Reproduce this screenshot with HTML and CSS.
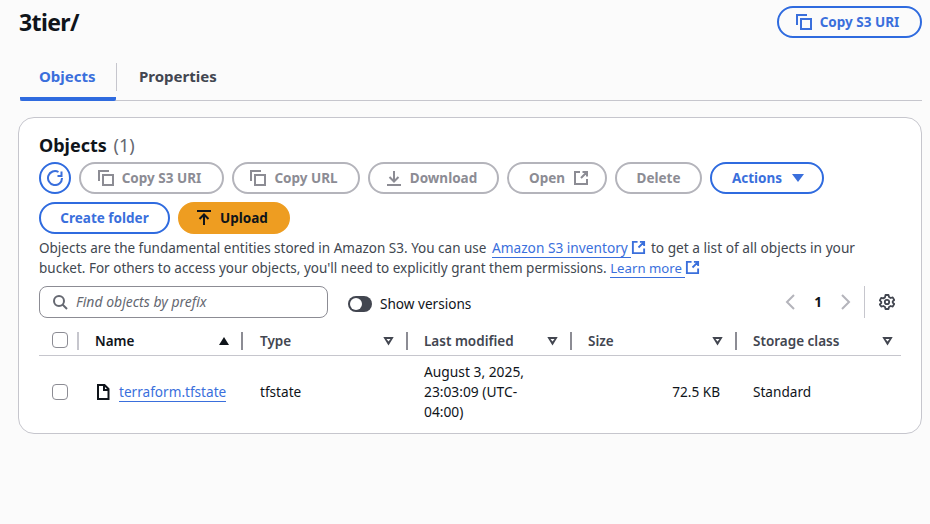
FILE: index.html
```html
<!DOCTYPE html>
<html>
<head>
    <title>3tier/</title>
    <meta charset="UTF-8">
    <link rel="stylesheet" href="styles.css">
</head>
<body>
    <svg class="defs" width="0" height="0">
        <symbol id="i-copy" viewBox="0 0 16 16"><path d="M1 11V1h10M5 5h10v10H5z" fill="none" stroke="currentColor" stroke-width="2"/></symbol>
        <symbol id="i-ext" viewBox="0 0 16 16"><path d="M7 2H2v12h12V9M9.500 2H14v4.500M14 2L8 8" fill="none" stroke="currentColor" stroke-width="2"/></symbol>
    </svg>

    <div class="page-head">
        <h1>3tier/</h1>
        <button class="btn btn-normal"><svg class="icon"><use href="#i-copy"/></svg>Copy S3 URI</button>
    </div>

    <div class="tabs">
        <div class="tab tab-active">Objects</div>
        <div class="tab">Properties</div>
    </div>

    <div class="card">
        <h2>Objects <span class="count">(1)</span></h2>
        <div class="toolbar">
            <button class="btn btn-normal btn-icon">
                <svg class="icon" viewBox="0 0 16 16"><path d="M15 8A7 7 0 1 1 11.500 2M10.500 6H14.500V1.500" fill="none" stroke="currentColor" stroke-width="2"/></svg>
            </button>
            <button class="btn btn-off btn-copy-uri"><svg class="icon"><use href="#i-copy"/></svg>Copy S3 URI</button>
            <button class="btn btn-off btn-copy-url"><svg class="icon"><use href="#i-copy"/></svg>Copy URL</button>
            <button class="btn btn-off btn-download">
                <svg class="icon" viewBox="0 0 16 16"><path d="M8 1v10M3.500 7L8 11.500 12.500 7M1 15h14" fill="none" stroke="currentColor" stroke-width="2"/></svg>Download
            </button>
            <button class="btn btn-off btn-open">Open<svg class="icon icon-after"><use href="#i-ext"/></svg></button>
            <button class="btn btn-off btn-delete">Delete</button>
            <button class="btn btn-normal btn-actions">Actions<svg class="icon icon-after" viewBox="0 0 16 16"><path d="M2 4h12L8 12z" fill="currentColor"/></svg></button>
        </div>
        <div class="toolbar">
            <button class="btn btn-normal btn-create">Create folder</button>
            <button class="btn btn-primary btn-upload">
                <svg class="icon" viewBox="0 0 16 16"><path d="M8 15V5M3.500 9L8 4.500 12.500 9M1 1h14" fill="none" stroke="currentColor" stroke-width="2"/></svg>Upload
            </button>
        </div>

        <p class="desc">Objects are the fundamental entities stored in Amazon S3. You can use <a href="#" class="ext-link inventory"><span>Amazon S3 inventory </span><svg class="icon-link"><use href="#i-ext"/></svg></a> <span class="tail">to get a list of all objects in your</span> bucket. For others to access your objects, you'll need to explicitly grant them permissions. <a href="#" class="ext-link more"><span>Learn more </span><svg class="icon-link"><use href="#i-ext"/></svg></a></p>

        <div class="filter-row">
            <div class="search">
                <svg class="icon" viewBox="0 0 16 16"><circle cx="7" cy="7" r="5" fill="none" stroke="currentColor" stroke-width="2"/><path d="M10.500 10.500L15 15" fill="none" stroke="currentColor" stroke-width="2"/></svg>
                <span>Find objects by prefix</span>
            </div>
            <div class="toggle"><span class="knob"></span></div>
            <span class="toggle-label">Show versions</span>
            <div class="pager">
                <svg class="pg-arrow" viewBox="0 0 10 16"><path d="M9 1L2 8l7 7" fill="none" stroke="currentColor" stroke-width="2"/></svg>
                <span class="pg-num">1</span>
                <svg class="pg-arrow" viewBox="0 0 10 16"><path d="M1 1l7 7-7 7" fill="none" stroke="currentColor" stroke-width="2"/></svg>
            </div>
            <div class="pref">
                <svg class="icon" viewBox="0 0 16 16"><circle cx="8" cy="8" r="2.200" fill="none" stroke="currentColor" stroke-width="1.800"/><path d="M6.500 1h3l.5 2 1.700 1 2-.6 1.500 2.600-1.500 1.400v1.200l1.500 1.400-1.500 2.600-2-.6-1.700 1-.5 2h-3l-.5-2-1.700-1-2 .6L.8 10.400l1.500-1.400V7.800L.8 6.400 2.300 3.800l2 .6 1.700-1z" fill="none" stroke="currentColor" stroke-width="1.800" stroke-linejoin="round"/></svg>
            </div>
        </div>

        <table class="objects">
            <thead>
                <tr>
                    <th class="col-check"><span class="check"></span></th>
                    <th class="col-name"><div class="th-in sorted">Name<span class="sort-up"></span></div></th>
                    <th class="col-type"><div class="th-in">Type<span class="sort"></span></div></th>
                    <th class="col-date"><div class="th-in">Last modified<span class="sort"></span></div></th>
                    <th class="col-size"><div class="th-in">Size<span class="sort"></span></div></th>
                    <th class="col-class"><div class="th-in no-line">Storage class<span class="sort"></span></div></th>
                </tr>
            </thead>
            <tbody>
                <tr>
                    <td class="col-check"><span class="check"></span></td>
                    <td class="col-name">
                        <svg class="file" viewBox="0 0 14 16"><path d="M2 1h6.500L12.500 5v10H2z M8 1v5h4.500" fill="none" stroke="currentColor" stroke-width="2"/></svg><a href="#">terraform.tfstate</a>
                    </td>
                    <td class="col-type">tfstate</td>
                    <td class="col-date">August 3, 2025, 23:03:09 (UTC-04:00)</td>
                    <td class="col-size">72.5 KB</td>
                    <td class="col-class">Standard</td>
                </tr>
            </tbody>
        </table>
    </div>
</body>
</html>
```

FILE: styles.css
```css
* {
    box-sizing: border-box;
}
body {
    margin: 0;
    padding: 6px 8px 0 18px;
    height: 524px;
    overflow: hidden;
    background: #fbfbfb;
    color: #0f141a;
    font-family: "Noto Sans", sans-serif;
    font-size: 13.600px;
    line-height: 20px;
}
.defs {
    position: absolute;
}
.page-head {
    display: flex;
    justify-content: space-between;
    align-items: flex-start;
}
h1 {
    margin: 0 0 0 1px;
    font-size: 23px;
    line-height: 32px;
    font-weight: 700;
    letter-spacing: -0.6px;
}
.btn {
    display: inline-flex;
    align-items: center;
    justify-content: center;
    height: 32px;
    padding: 0 20px;
    border: 2px solid #2f6bdf;
    border-radius: 16px;
    background: #fff;
    color: #3a6fdc;
    font-family: inherit;
    font-size: 13.500px;
    font-weight: 700;
    white-space: nowrap;
}
.page-head .btn {
    background: #fbfbfb;
    width: 145px;
}
.btn-off {
    border-color: #b4b4bb;
    color: #8c8c94;
}
.btn-primary {
    background: #ee9d21;
    border-color: #ee9d21;
    color: #0f141a;
}
.btn-icon {
    width: 32px;
    padding: 0;
}
.btn-copy-uri { width: 145px; }
.btn-copy-url { width: 128px; }
.btn-download { width: 131px; }
.btn-open { width: 100px; }
.btn-delete { width: 87px; }
.btn-actions { width: 114px; }
.btn-create { width: 131px; }
.btn-upload { width: 112px; }
.icon {
    width: 16px;
    height: 16px;
    margin: 0 8px 0 -4px;
    flex: none;
}
.icon-after {
    margin: 0 -4px 0 8px;
}
.btn-icon .icon {
    margin: 0;
}
.tabs {
    display: flex;
    height: 63px;
    padding-top: 22px;
    border-bottom: 1px solid #c6c6cd;
    margin-left: 2px;
}
.tab {
    position: relative;
    height: 41px;
    padding: 6px 20px 0 19px;
    color: #424650;
    font-size: 15px;
    font-weight: 700;
}
.tab-active {
    width: 96px;
    color: #3a6fdc;
    border-bottom: 4px solid #2f6bdf;
    border-radius: 2px;
}
.tab-active::after {
    content: "";
    position: absolute;
    right: -1px;
    top: 3px;
    height: 28px;
    border-right: 1px solid #c6c6cd;
}
.tab:not(.tab-active) {
    padding-left: 23px;
}
.card {
    margin-top: 16px;
    height: 317px;
    padding: 15px 20px 0 20px;
    border: 1px solid #c6c6cd;
    border-radius: 16px;
    background: #fff;
}
h2 {
    margin: 0;
    font-size: 18px;
    line-height: 24px;
    font-weight: 700;
    word-spacing: 2px;
}
.count {
    color: #656871;
    font-weight: 400;
}
.toolbar {
    display: flex;
    gap: 8px;
    margin-top: 8px;
}
h2 + .toolbar {
    margin-top: 5px;
}
.desc {
    margin: 4px 0 0;
    color: #414750;
    font-size: 13.500px;
    width: 840px;
}
.desc a, .col-name a {
    color: #3a6fdc;
    text-decoration: none;
}
.col-name a, .ext-link span {
    border-bottom: 1px solid #3a6fdc;
}
.ext-link span {
    font-size: 13.700px;
}
.inventory {
    margin-left: 2px;
}
.ext-link.more span {
    font-size: 13.200px;
}
.tail {
    font-size: 13.700px;
}
.icon-link {
    width: 15px;
    height: 15px;
    margin-right: 1px;
    vertical-align: -2px;
}
.filter-row {
    display: flex;
    align-items: center;
    height: 32px;
    margin-top: 8px;
}
.search {
    display: flex;
    align-items: center;
    width: 289px;
    height: 32px;
    padding: 0 12px;
    border: 1px solid #8c8c94;
    border-radius: 8px;
    color: #656871;
    font-size: 14px;
    font-style: italic;
}
.search .icon {
    margin: 0 8px 0 0;
}
.toggle {
    width: 24px;
    height: 16px;
    margin: 4px 8px 0 20px;
    padding: 2px;
    border-radius: 8px;
    background: #424650;
}
.knob {
    display: block;
    width: 12px;
    height: 12px;
    border-radius: 50%;
    background: #fff;
}
.toggle-label {
    margin-top: 4px;
}
.pager {
    display: flex;
    align-items: center;
    gap: 19px;
    margin-left: auto;
    padding-right: 13px;
    height: 32px;
    border-right: 1px solid #c6c6cd;
}
.pg-arrow {
    width: 10px;
    height: 16px;
    color: #b4b4bb;
}
.pg-num {
    font-weight: 700;
}
.pref {
    display: flex;
    padding: 0 6px 0 14px;
    color: #424650;
}
.pref .icon {
    margin: 0;
}
.objects {
    width: 862px;
    margin-top: 14px;
    border-collapse: collapse;
    table-layout: fixed;
}
th {
    padding: 0;
    text-align: left;
    color: #424650;
    border-bottom: 1px solid #c6c6cd;
    font-size: 13.500px;
    font-weight: 600;
    vertical-align: top;
}
thead tr {
    height: 23px;
}
td {
    padding: 6px 0;
    vertical-align: middle;
}
.col-check {
    width: 40px;
    padding-left: 13px;
}
.col-name {
    width: 164px;
}
.col-type {
    width: 165px;
}
.col-date {
    width: 164px;
}
.col-size {
    width: 165px;
}
.col-class {
    width: 164px;
}
td.col-name {
    padding-left: 17px;
}
td.col-type {
    padding-left: 17px;
}
td.col-date, td.col-class {
    padding-left: 16px;
}
td.col-date {
    padding-right: 30px;
    font-size: 13.800px;
}
td.col-size {
    padding-right: 17px;
    text-align: right;
}
.check {
    display: block;
    width: 16px;
    height: 16px;
    border: 1px solid #8c8c94;
    border-radius: 4px;
    background: #fff;
}
th.col-check {
    position: relative;
}
th.col-check::after {
    content: "";
    position: absolute;
    right: 0;
    top: 0;
    height: 18px;
    border-right: 2px solid #c6c6cd;
}
.th-in {
    display: flex;
    align-items: center;
    justify-content: space-between;
    height: 18px;
    padding: 0 12px 0 16px;
    border-right: 2px solid #8c8c94;
}
.col-type .th-in {
    padding-left: 17px;
}
.no-line {
    border-right: 0;
    padding-right: 8px;
}
.sorted {
    color: #0f141a;
}
.sort, .sort-up {
    width: 0;
    height: 0;
    border-left: 5.500px solid transparent;
    border-right: 5.500px solid transparent;
}
.sort-up {
    border-bottom: 8px solid #0f141a;
}
.sort {
    width: 11px;
    height: 9px;
    border: 0;
    background: #424650;
    clip-path: polygon(0 0, 100% 0, 50% 100%, 0 0, 3.500px 2.500px, 5.500px 5px, 7.500px 2.500px, 3.500px 2.500px);
}
.file {
    width: 14px;
    height: 16px;
    margin-right: 9px;
    vertical-align: -3px;
}
```
